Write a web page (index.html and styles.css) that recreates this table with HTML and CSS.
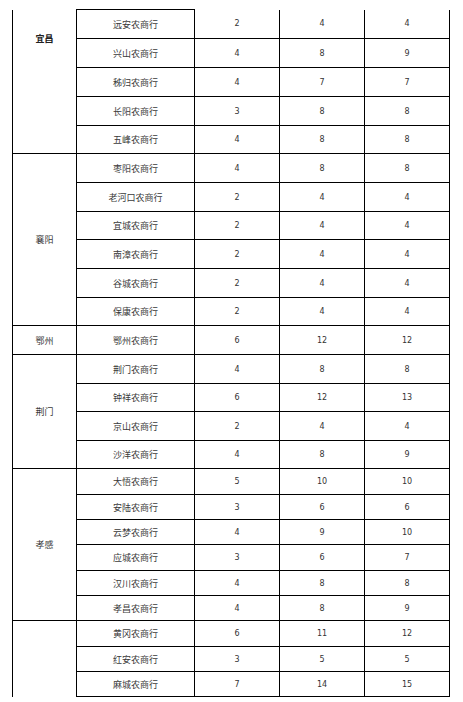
FILE: index.html
```html
<!DOCTYPE html>
<html lang="zh-CN">
<head>
<meta charset="utf-8">
<title>农商行</title>
<link rel="stylesheet" href="styles.css">
</head>
<body>
<div class="page">
<table class="grid">
<colgroup><col class="c1"><col class="c2"><col class="c3"><col class="c4"><col class="c5"></colgroup>
<tbody>
<tr class="h29"><td class="city first" rowspan="5"><span class="top-label">宜昌</span></td><td class="bank topline">远安农商行</td><td>2</td><td>4</td><td>4</td></tr>
<tr class="h29"><td class="bank">兴山农商行</td><td>4</td><td>8</td><td>9</td></tr>
<tr class="h29"><td class="bank">秭归农商行</td><td>4</td><td>7</td><td>7</td></tr>
<tr class="h29"><td class="bank">长阳农商行</td><td>3</td><td>8</td><td>8</td></tr>
<tr class="h28"><td class="bank">五峰农商行</td><td>4</td><td>8</td><td>8</td></tr>

<tr class="h29"><td class="city" rowspan="6">襄阳</td><td class="bank">枣阳农商行</td><td>4</td><td>8</td><td>8</td></tr>
<tr class="h29"><td class="bank">老河口农商行</td><td>2</td><td>4</td><td>4</td></tr>
<tr class="h28"><td class="bank">宜城农商行</td><td>2</td><td>4</td><td>4</td></tr>
<tr class="h29"><td class="bank">南漳农商行</td><td>2</td><td>4</td><td>4</td></tr>
<tr class="h29"><td class="bank">谷城农商行</td><td>2</td><td>4</td><td>4</td></tr>
<tr class="h28"><td class="bank">保康农商行</td><td>2</td><td>4</td><td>4</td></tr>

<tr class="h29"><td class="city">鄂州</td><td class="bank">鄂州农商行</td><td>6</td><td>12</td><td>12</td></tr>

<tr class="h29"><td class="city" rowspan="4">荆门</td><td class="bank">荆门农商行</td><td>4</td><td>8</td><td>8</td></tr>
<tr class="h28"><td class="bank">钟祥农商行</td><td>6</td><td>12</td><td>13</td></tr>
<tr class="h29"><td class="bank">京山农商行</td><td>2</td><td>4</td><td>4</td></tr>
<tr class="h28"><td class="bank">沙洋农商行</td><td>4</td><td>8</td><td>9</td></tr>

<tr class="h26"><td class="city" rowspan="6">孝感</td><td class="bank">大悟农商行</td><td>5</td><td>10</td><td>10</td></tr>
<tr class="h25"><td class="bank">安陆农商行</td><td>3</td><td>6</td><td>6</td></tr>
<tr class="h25"><td class="bank">云梦农商行</td><td>4</td><td>9</td><td>10</td></tr>
<tr class="h26"><td class="bank">应城农商行</td><td>3</td><td>6</td><td>7</td></tr>
<tr class="h25"><td class="bank">汉川农商行</td><td>4</td><td>8</td><td>8</td></tr>
<tr class="h25"><td class="bank">孝昌农商行</td><td>4</td><td>8</td><td>9</td></tr>

<tr class="h26"><td class="city last" rowspan="3"></td><td class="bank">黄冈农商行</td><td>6</td><td>11</td><td>12</td></tr>
<tr class="h25"><td class="bank">红安农商行</td><td>3</td><td>5</td><td>5</td></tr>
<tr class="h25"><td class="bank">麻城农商行</td><td>7</td><td>14</td><td>15</td></tr>
</tbody>
</table>
</div>
</body>
</html>
```

FILE: styles.css
```css
html, body {
  margin: 0;
  padding: 0;
  background: #ffffff;
}

.page {
  padding: 9px 0 0 12px;
}

.grid {
  border-collapse: collapse;
  table-layout: fixed;
  width: 438px;
  font-family: "DejaVu Sans", "Liberation Sans", sans-serif;
  font-size: 8px;
  color: #333333;
}

.c1 { width: 64px; }
.c2 { width: 118px; }
.c3 { width: 85px; }
.c4 { width: 85px; }
.c5 { width: 85px; }

.grid td {
  border: 1px solid #000000;
  padding: 0;
  text-align: center;
  vertical-align: middle;
}

.grid tr:first-child td {
  border-top: none;
}

.grid tr:first-child td.topline {
  border-top: 1px solid #000000;
}

.h29 { height: 29px; }
.h28 { height: 28px; }
.h26 { height: 26px; }
.h25 { height: 25px; }

.bank, .city {
  font-family: "Noto Sans CJK SC", "Noto Sans", sans-serif;
  font-size: 9px;
  letter-spacing: 0;
  color: #3a3a3a;
}

.city.first {
  vertical-align: top;
}

.top-label {
  display: block;
  padding-top: 22px;
  font-weight: bold;
  color: #222222;
}

.city.last {
  border-bottom: none;
}
```
